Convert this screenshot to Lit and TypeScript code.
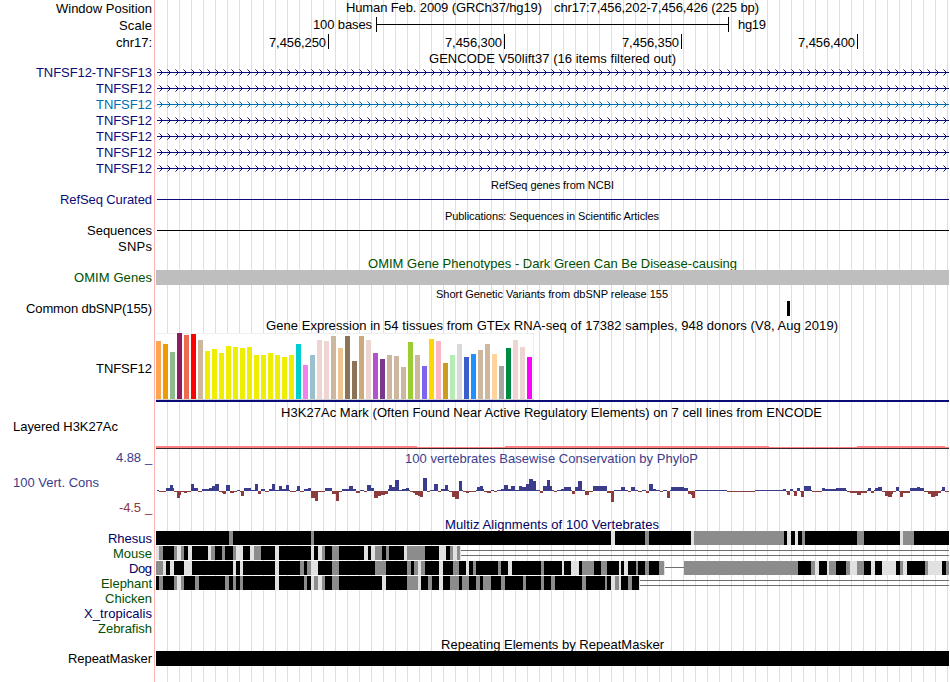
import { LitElement, html, svg, css } from "lit";
import { customElement, property } from "lit/decorators.js";

const INK = "#000000";
const NAVY = "#0c0c78";
const GREEN = "#005000";
const BLUE = "#3c3c8c";
const RED = "#8c3c3c";
const LEFT = 155;
const RIGHT = 949;

/* Text run: [text, left x, baseline y, width, colour, size] */
type Run = [string, number, number, number, string?, number?];

interface Band {
  top: number;
  height: number;
  labels?: Run[];
  titles?: Run[];
  plot?: () => unknown;
}

const run = ([text, x, y, width, color = INK, size = 13]: Run) => svg`
  <text x=${x} y=${y} fill=${color} font-size=${size} textLength=${width}>${text}</text>`;

const rect = (x: number, y: number, w: number, h: number, fill = INK) =>
  svg`<rect x=${x} y=${y} width=${w} height=${h} fill=${fill}></rect>`;

/* Intron line with strand chevrons every 8px */
const intron = (y: number, color: string) => {
  let inner = "";
  let outer = "";
  for (let x = 162; x < RIGHT; x += 8) {
    for (let i = 1; i <= 3; i++) {
      const dots = `M${x - i} ${y - i}h1v1h-1zM${x - i} ${y + i}h1v1h-1z`;
      if (i < 3) inner += dots;
      else outer += dots;
    }
  }
  return svg`
    ${rect(157, y, RIGHT - 157, 1, color)}
    <path d=${inner} fill=${color}></path>
    <path d=${outer} fill=${color} opacity="0.55"></path>`;
};

const gene = (name: string, index: number, x = 96, color = NAVY): Band => {
  const y = 72 + index * 16;
  return {
    top: y - 8,
    height: 16,
    labels: [[name, x, y + 5, 152 - x, color]],
    plot: () => intron(y, color),
  };
};

/* GTEx tissue bars: [top y, colour] */
const tan = "#cdb79e";
const yel = "#eeee00";
const rose = "#eed5d2";
const tissues: [number, string][] = [
  [341, "#ffa54f"], [344, "#ee9a00"], [352, "#8fbc8f"], [333, "#8b1c62"], [335, "#ee6a50"], [334, "#ff0000"],
  [340, tan], [351, yel], [349, yel], [353, yel], [346, yel], [347, yel], [348, yel], [347, yel], [355, yel],
  [355, yel], [353, yel], [355, yel], [357, yel], [355, yel], [344, "#00cdcd"], [365, "#ee82ee"],
  [355, "#9ac0cd"], [340, rose], [341, rose], [336, tan], [348, "#eec591"], [336, "#8b7355"],
  [361, "#8b7355"], [336, "#cdaa7d"], [340, rose], [353, "#b452cd"], [359, "#7a378b"], [355, tan], [356, tan],
  [367, tan], [342, "#9acd32"], [355, tan], [366, "#7a67ee"], [339, "#ffd700"], [341, "#ffb6c1"],
  [363, "#cd9b1d"], [355, "#b4eeb4"], [344, "#d9d9d9"], [357, "#3a5fcd"], [354, "#1e90ff"], [350, tan],
  [344, tan], [354, "#ffd39b"], [366, "#a6a6a6"], [348, "#008b45"], [340, rose], [347, rose], [357, "#ff00ff"],
];

/* Conservation scores as "end:height" steps, positions in thirds of a pixel from an origin */
const scores: [number, number, string][] = [
  [150, 18, "21:0 27:1 48:-1 60:3 69:6 72:3 81:-1 90:-7 93:-4 102:-1 111:-2 123:-1 132:7 144:3 156:-1 178:2 187:3 196:5 207:7 216:-1 219:-2 228:-3 240:6 252:-2 261:-1 270:1 273:-1 282:-5 303:3 315:1 324:7 333:-3 345:2 357:-1 366:2 375:7 387:1 396:5 408:2 417:6 420:1 438:-1 441:1 450:5 462:-1 474:2 483:3 495:-7 504:-10 525:-1 546:3 558:-3 567:-10 576:-1 597:2 609:5 618:2 630:-2 642:1 651:-1 663:6 672:3 684:-7 693:-5 705:-4 714:-3 717:2 726:6 735:4 747:11 756:1 768:2 777:3 780:1 789:-1 795:-2"],
  [415, 0, "9:-4 15:-5 24:-6 36:13 45:-1 57:1 68:7 78:-1 90:2 98:6 102:1 111:-1 120:-6 132:-8 141:10 144:1 153:-1 162:-2 183:-1 186:1 195:4 204:5 207:2 216:-1 228:-2 237:1 246:-1 258:1 267:2 279:6 288:2 300:5 312:1 321:5 333:4 342:7 354:12 363:10 375:1 384:-2 396:5 405:11 411:5 417:1 426:-1 438:1 447:2 468:4 471:1 480:-3 489:4 501:10 510:1 522:-4 534:-1 576:5 588:-2 597:-11 618:1 630:4 639:1 648:-1 660:4 669:1 681:-1 693:1 702:-2 714:7 723:2 735:1 744:-1 756:1 765:-7 768:1 795:4"],
  [680, 0, "12:4 24:3 33:-3 36:-4 45:-7 141:1 225:-1 309:1 318:2 321:-1 330:-4 339:2 342:-1 351:-5 360:3 363:-1 372:-6 393:5 396:1 426:-1 435:3 468:2 498:3 501:1 510:-1 531:-2 543:-4 561:-2 564:1 573:3 582:-2 585:1 594:3 606:4 615:-1 624:-5 636:-6 639:-3 648:-1 657:4 660:-1 669:-6 690:-2 711:3 720:4 732:3 744:-1 753:-3 765:-6 774:-5 783:-2 786:1 795:4 807:-1"],
];

const conservation = () =>
  scores.map(([origin, start, steps]) => {
    let from = start;
    return steps.split(" ").map((step) => {
      const [end, h] = step.split(":").map(Number);
      const x = origin + Math.round(from / 3);
      const w = origin + Math.round(end / 3) - x;
      from = end;
      return h > 0 ? rect(x, 491 - h, w, h, BLUE) : rect(x, 491, w, -h, RED);
    });
  });

/* Alignment blocks: black base spans with shades "from-to" (G mid grey, L light grey) */
interface Alignment {
  spans: [number, number][];
  lines?: [number, number, number][];
  shades: [number, string][];
}

const alignments: Alignment[] = [
  {
    spans: [[156, 949]],
    shades: [
      [150, "G237-249 G483-492"],
      [415, "L588-600 G690-702"],
      [680, "L33-42 G42-312 L321-333 L345-354 G366-375 G531-552 L660-669 G669-702"],
    ],
  },
  {
    spans: [[156, 461]],
    lines: [[550, 461, 949], [555, 461, 949]],
    shades: [
      [150, "L18-27 G27-39 G72-81 L81-93 G93-102 L114-126 L174-183 G183-195 G216-225 G249-258 L258-279 L300-312 G312-333 L375-387 L483-492 L504-516 G516-525 G546-567 L642-654 L663-675 G675-696 G708-717 L762-771 G771-810"],
      [415, "G0-30 L72-93 G105-114 L114-126 G126-135 L135-138"],
    ],
  },
  {
    spans: [[156, 665], [684, 949]],
    lines: [[567, 665, 684]],
    shades: [
      [150, "G18-39 L39-48 L60-72 L102-126 L249-258 L270-279 L375-387 G450-462 G471-483 L483-504 G546-567 G675-708 G771-783 G792-804 L804-810"],
      [415, "L9-18 G18-30 L72-84 G114-132 L153-162 G174-183 G249-258 L279-291 G378-387 L441-447 L468-492 G501-537 G558-576 L612-618 L627-639 G663-669 G690-702 G732-747 L747-750"],
      [680, "G12-354 G393-405 L405-417 L441-447 G447-468 G498-510 L510-531 G531-552 L573-585 L606-648 G660-669 L669-681 G735-744 L744-786 G798-807"],
    ],
  },
  {
    spans: [[156, 640]],
    lines: [[580, 640, 949], [585, 640, 949]],
    shades: [
      [150, "G27-39 G72-81 L81-93 G93-102 G135-147 G225-237 G249-258 G270-279 L375-387 G462-471 L483-492 G492-504 L504-516 G516-525 G546-567 L696-708 G771-804 L804-810"],
      [415, "L9-18 G39-51 L72-84 G105-132 G141-162 G183-195 G204-228 G258-270 G324-333 G378-387 G408-420 G501-513 G570-576 L588-600 G600-612 L612-618 G639-651 L672-675"],
    ],
  },
];

const alignment = (index: number) => {
  const y = 531 + index * 15;
  const { spans, lines = [], shades } = alignments[index];
  return svg`
    ${spans.map(([a, b]) => rect(a, y, b - a, 14))}
    ${lines.map(([ly, a, b]) => rect(a, ly, b - a, 1, "#6e6e6e"))}
    ${shades.map(([origin, list]) =>
      list.split(" ").map((item) => {
        const [a, b] = item.slice(1).split("-").map((v) => origin + Math.round(Number(v) / 3));
        return rect(a, y, b - a, 14, item[0] === "G" ? "#8c8c8c" : "#e1e1e1");
      }),
    )}`;
};

const species = (name: string, index: number, x: number, color: string): Band => ({
  top: 531 + index * 15,
  height: 15,
  labels: [[name, x, 543 + index * 15, 152 - x, color]],
  plot: () => (index < 4 ? alignment(index) : null),
});

const bands: Band[] = [
  {
    top: 0,
    height: 16,
    labels: [["Window Position", 56, 13, 96]],
    titles: [
      ["Human Feb. 2009 (GRCh37/hg19)", 346, 12, 196],
      ["chr17:7,456,202-7,456,426 (225 bp)", 554, 12, 205],
    ],
  },
  {
    top: 16,
    height: 17,
    labels: [["Scale", 119, 30, 33]],
    titles: [["100 bases", 313, 29, 59], ["hg19", 738, 29, 28]],
    plot: () => [rect(376, 24, 353, 1), rect(376, 17, 1, 15), rect(728, 17, 1, 15)],
  },
  {
    top: 33,
    height: 17,
    labels: [["chr17:", 116, 47, 36]],
    titles: [
      ["7,456,250", 269, 47, 57], ["7,456,300", 445, 47, 57],
      ["7,456,350", 622, 47, 57], ["7,456,400", 798, 47, 57],
    ],
    plot: () => [328, 504, 681, 857].map((x) => rect(x, 34, 1, 15)),
  },
  { top: 50, height: 14, titles: [["GENCODE V50lift37 (16 items filtered out)", 429, 63, 247]] },
  gene("TNFSF12-TNFSF13", 0, 36),
  gene("TNFSF12", 1),
  gene("TNFSF12", 2, 96, "#0070b0"),
  gene("TNFSF12", 3),
  gene("TNFSF12", 4),
  gene("TNFSF12", 5),
  gene("TNFSF12", 6),
  { top: 176, height: 16, titles: [["RefSeq genes from NCBI", 491, 189, 123, INK, 11]] },
  {
    top: 192,
    height: 16,
    labels: [["RefSeq Curated", 60, 204, 92, NAVY]],
    plot: () => rect(157, 199, RIGHT - 157, 1, NAVY),
  },
  { top: 208, height: 15, titles: [["Publications: Sequences in Scientific Articles", 445, 220, 214, INK, 11]] },
  {
    top: 223,
    height: 16,
    labels: [["Sequences", 87, 235, 65]],
    plot: () => rect(157, 230, RIGHT - 157, 1),
  },
  { top: 239, height: 16, labels: [["SNPs", 118, 251, 34]] },
  { top: 255, height: 15, titles: [["OMIM Gene Phenotypes - Dark Green Can Be Disease-causing", 368, 268, 369, GREEN]] },
  {
    top: 270,
    height: 16,
    labels: [["OMIM Genes", 74, 282, 78, GREEN]],
    plot: () => rect(156, 270, RIGHT - 156, 15, "#bebebe"),
  },
  { top: 286, height: 15, titles: [["Short Genetic Variants from dbSNP release 155", 436, 298, 232, INK, 11]] },
  {
    top: 301,
    height: 16,
    labels: [["Common dbSNP(155)", 26, 313, 126]],
    plot: () => rect(787, 301, 3, 15),
  },
  {
    top: 317,
    height: 16,
    titles: [["Gene Expression in 54 tissues from GTEx RNA-seq of 17382 samples, 948 donors (V8, Aug 2019)", 266, 330, 572]],
  },
  {
    top: 333,
    height: 70,
    labels: [["TNFSF12", 96, 373, 56]],
    plot: () => [
      rect(156, 333, 378, 67, "#f0f0f0"),
      rect(156, 334, 377, 65, "#ffffff"),
      rect(156, 399, 378, 1, "#d2d2d2"),
      tissues.map(([y, color], i) => rect(156 + i * 7, y, 5, 399 - y, color)),
      rect(156, 400, RIGHT - 156, 2, NAVY),
    ],
  },
  {
    top: 403,
    height: 47,
    labels: [["Layered H3K27Ac", 13, 431, 105]],
    titles: [["H3K27Ac Mark (Often Found Near Active Regulatory Elements) on 7 cell lines from ENCODE", 281, 417, 541]],
    plot: () => [
      rect(156, 447, RIGHT - 156, 1, "#ff8080"),
      [[156, 417], [505, 769], [857, 945]].map(([a, b]) => rect(a, 446, b - a, 1, "#ff8080")),
      rect(156, 448, RIGHT - 156, 1, "#382828"),
    ],
  },
  {
    top: 450,
    height: 65,
    labels: [
      ["4.88", 116, 462, 25, BLUE], ["_", 145, 462, 7, BLUE],
      ["100 Vert. Cons", 13, 487, 86, BLUE],
      ["-4.5", 119, 512, 22, RED], ["_", 145, 512, 7, RED],
    ],
    titles: [["100 vertebrates Basewise Conservation by PhyloP", 405, 463, 293, BLUE]],
    plot: conservation,
  },
  { top: 515, height: 16, titles: [["Multiz Alignments of 100 Vertebrates", 445, 529, 214, "#000064"]] },
  species("Rhesus", 0, 108, "#000064"),
  species("Mouse", 1, 113, GREEN),
  species("Dog", 2, 129, "#000064"),
  species("Elephant", 3, 101, GREEN),
  species("Chicken", 4, 105, GREEN),
  species("X_tropicalis", 5, 84, "#000064"),
  species("Zebrafish", 6, 98, GREEN),
  { top: 636, height: 15, titles: [["Repeating Elements by RepeatMasker", 441, 649, 223]] },
  {
    top: 651,
    height: 31,
    labels: [["RepeatMasker", 68, 663, 84]],
    plot: () => rect(156, 651, RIGHT - 156, 15),
  },
];

@customElement("track-band")
class TrackBand extends LitElement {
  @property({ attribute: false }) band!: Band;

  static styles = css`
    :host {
      display: flex;
      flex: none;
    }
    svg {
      display: block;
      flex: none;
      overflow: visible;
      shape-rendering: crispEdges;
      font-family: "Liberation Sans", Arial, sans-serif;
    }
  `;

  render() {
    const { top, height, labels = [], titles = [], plot } = this.band;
    return html`
      <svg width=${LEFT} height=${height} viewBox="0 ${top} ${LEFT} ${height}">${labels.map(run)}</svg>
      <svg width=${RIGHT - LEFT} height=${height} viewBox="${LEFT} ${top} ${RIGHT - LEFT} ${height}">
        ${plot?.()}${titles.map(run)}
      </svg>
    `;
  }
}

@customElement("app-root")
class AppRoot extends LitElement {
  static styles = css`
    :host {
      display: block;
      width: 950px;
      height: 682px;
      overflow: hidden;
      background: #ffffff;
    }
    .browser {
      display: flex;
      flex-direction: column;
      width: 949px;
      height: 682px;
      background-image:
        linear-gradient(#ffb4b4, #ffb4b4),
        repeating-linear-gradient(to right, transparent 0 11px, #dcdcf8 11px 12px);
      background-size: 1px 100%, 793px 100%;
      background-position: 154px 0, 156px 0;
      background-repeat: no-repeat;
    }
  `;

  render() {
    return html`<div class="browser">${bands.map((band) => html`<track-band .band=${band}></track-band>`)}</div>`;
  }
}
